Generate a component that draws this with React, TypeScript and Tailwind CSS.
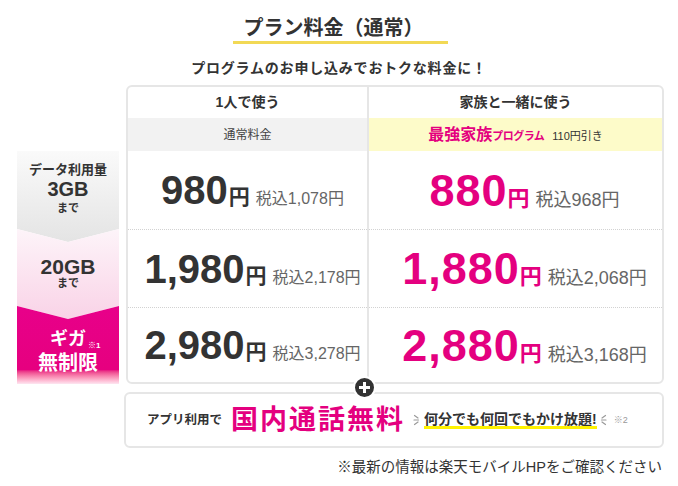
import React from 'react'

const single = [
  { price: '980', tax: '1,078' },
  { price: '1,980', tax: '2,178' },
  { price: '2,980', tax: '3,278' },
]

const family = [
  { price: '880', tax: '968' },
  { price: '1,880', tax: '2,068' },
  { price: '2,880', tax: '3,168' },
]

const rowHeights = ['h-[78px]', 'h-[78px] border-t border-dotted border-[#d2d2d2]', 'h-[75px] border-t border-dotted border-[#d2d2d2]']

function Sparkle({ flip }: { flip?: boolean }) {
  return (
    <svg width="7" height="14" viewBox="0 0 7 14" className={flip ? 'shrink-0 -scale-x-100' : 'shrink-0'}>
      <g stroke="#9a9a9a" strokeWidth="1.2" strokeLinecap="round">
        <path d="M1.5 2.5 L5 5" />
        <path d="M1 7 H5.5" />
        <path d="M1.5 11.5 L5 9" />
      </g>
    </svg>
  )
}

// left "data usage" column with chevron sections
function UsageColumn() {
  return (
    <div className="w-[102px] shrink-0 flex flex-col pt-[66px] text-[#333]">
      <div className="h-[91px] bg-linear-to-b from-[#fafafa] to-[#e4e4e4] [clip-path:polygon(0_0,100%_0,100%_78px,50%_100%,0_78px)] flex flex-col items-center pt-[12px]">
        <span className="text-[13px] font-bold leading-none">データ利用量</span>
        <span className="text-[20px] font-bold leading-none mt-[3px]">3GB</span>
        <span className="text-[11px] font-bold leading-none mt-[4px]">まで</span>
      </div>
      <div className="h-[90px] mt-[-13px] bg-linear-to-b from-[#fdf4f9] to-[#f9d3e7] [clip-path:polygon(0_0,50%_13px,100%_0,100%_77px,50%_100%,0_77px)] flex flex-col items-center pt-[27px]">
        <span className="text-[21px] font-bold leading-none">20GB</span>
        <span className="text-[11px] font-bold leading-none mt-[1px]">まで</span>
      </div>
      <div className="h-[78px] mt-[-13px] bg-linear-to-b from-[#e8008a] via-[#e6007f] via-82% to-[#fde6f1] [clip-path:polygon(0_0,50%_13px,100%_0,100%_100%,0_100%)] flex flex-col items-center pt-[24px] text-white">
        <span className="relative text-[18px] font-bold leading-none">
          ギガ
          <span className="absolute left-[calc(100%+2px)] bottom-[-2px] text-[8px] leading-none">※1</span>
        </span>
        <span className="text-[20px] font-bold leading-none mt-[5px]">無制限</span>
      </div>
    </div>
  )
}

export default function App() {
  return (
    <div className="relative w-[678px] h-[486px] bg-white text-[#333] font-['Liberation_Sans','Noto_Sans_CJK_JP',sans-serif] overflow-hidden">
      {/* title */}
      <div className="pt-[18px]">
        <div className="ml-[233px] w-[215px] border-b-[3px] border-[#f2d955] pb-[3px] pr-[14px] text-center text-[20px] font-bold leading-[20px]">
          プラン料金（通常）
        </div>
      </div>
      <p className="mt-[17px] text-center text-[14px] font-bold leading-[14px] tracking-[0.8px]">
        プログラムのお申し込みでおトクな料金に！
      </p>

      <div className="flex gap-[7px] pl-[17px] mt-[10px]">
        <UsageColumn />

        <div className="w-[538px] flex flex-col">
          <div className="grid grid-cols-[241px_1fr] rounded-[6px] border-2 border-[#e6e6e6] overflow-hidden">
            {/* single */}
            <div className="flex flex-col border-r-2 border-[#e6e6e6]">
              <div className="h-[31px] flex items-center justify-center text-[14px] font-bold">1人で使う</div>
              <div className="h-[33px] flex items-center justify-center bg-[#f2f2f2] text-[12px] text-[#444]">通常料金</div>
              {single.map((r, i) => (
                <div key={r.price} className={`${rowHeights[i]} flex items-center justify-center pl-[10px]`}>
                  <div className="flex items-baseline">
                    <span className="text-[40px] font-bold leading-none">{r.price}</span>
                    <span className="text-[21px] font-bold leading-none ml-[1px]">円</span>
                    <span className="text-[16px] leading-none text-[#666] ml-[6px]">税込{r.tax}円</span>
                  </div>
                </div>
              ))}
            </div>
            {/* family */}
            <div className="flex flex-col">
              <div className="h-[31px] flex items-center justify-center text-[14px] font-bold">家族と一緒に使う</div>
              <div className="h-[33px] flex items-center justify-center bg-[#fdfbc9]">
                <div className="flex items-baseline">
                  <span className="text-[16px] font-bold leading-none text-[#e4007f]">最強家族</span>
                  <span className="text-[11px] font-bold leading-none text-[#e4007f] tracking-[-0.5px]">プログラム</span>
                  <span className="text-[11px] leading-none ml-[8px]">110円引き</span>
                </div>
              </div>
              {family.map((r, i) => (
                <div key={r.price} className={`${rowHeights[i]} flex items-center justify-center pl-[18px]`}>
                  <div className="flex items-baseline">
                    <span className="text-[45px] font-bold leading-none tracking-[1px] text-[#e4007f]">{r.price}</span>
                    <span className="text-[22px] font-bold leading-none text-[#e4007f]">円</span>
                    <span className="text-[18px] leading-none text-[#666] ml-[6px]">税込{r.tax}円</span>
                  </div>
                </div>
              ))}
            </div>
          </div>

          {/* call plan */}
          <div className="mt-[8px] ml-[-2px] h-[56px] rounded-[6px] border-2 border-[#e6e6e6] flex items-center pl-[21px]">
            <span className="text-[12.5px] font-bold leading-none">アプリ利用で</span>
            <span className="ml-[9px] text-[27px] font-bold leading-none tracking-[2px] text-[#e4007f]">国内通話無料</span>
            <span className="ml-[8px]"><Sparkle /></span>
            <span className="ml-[4px] text-[14px] font-bold leading-[14px] border-b-[3px] border-[#fff200]">何分でも何回でもかけ放題!</span>
            <span className="ml-[3px]"><Sparkle flip /></span>
            <span className="ml-[7px] text-[9px] leading-none text-[#999]">※2</span>
          </div>
        </div>
      </div>

      <p className="mt-[11px] pr-[16px] text-right text-[14.5px] leading-[16px]">
        ※最新の情報は楽天モバイルHPをご確認ください
      </p>

      {/* plus badge between the two cards */}
      <div className="absolute left-[353px] top-[376px] w-[23px] h-[23px] rounded-full bg-[#333] border-2 border-white flex items-center justify-center">
        <svg width="11" height="11" viewBox="0 0 11 11">
          <rect x="0" y="4" width="11" height="3" fill="#fff" />
          <rect x="4" y="0" width="3" height="11" fill="#fff" />
        </svg>
      </div>
    </div>
  )
}
